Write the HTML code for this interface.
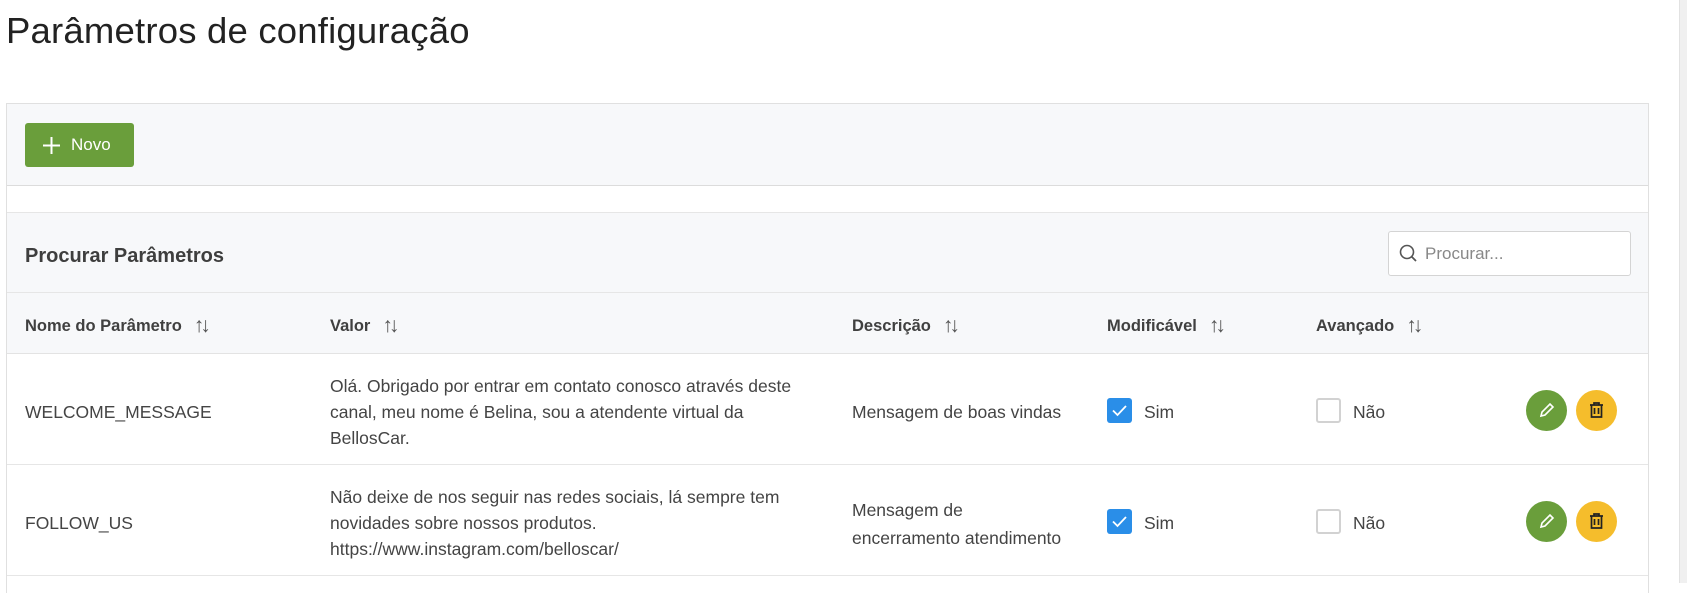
<!DOCTYPE html>
<html><head><meta charset="utf-8"><style>
*{box-sizing:border-box;margin:0;padding:0}
body{width:1687px;height:583px;background:#fff;font-family:"Liberation Sans",sans-serif;color:#333;position:relative;overflow:hidden}
.abs{position:absolute}
h1{position:absolute;left:6px;top:10px;font-size:36.5px;font-weight:normal;color:#222;letter-spacing:0.2px}
.card{position:absolute;left:6px;top:103px;width:1643px;height:490px;border:1px solid #e0e0e0;border-bottom:none}
.tb{position:absolute;left:0;top:0;width:100%;height:82px;background:#f7f8fa;border-bottom:1px solid #dcdcdc}
.btn{position:absolute;left:18px;top:19px;width:109px;height:44px;background:#6a9e3b;border-radius:3px;color:#fff;font-size:17px;line-height:44px;padding-left:46px}
.btn svg{position:absolute;left:18px;top:14px}
.sh{position:absolute;left:0;top:108px;width:100%;height:81px;background:#f7f8fa;border-top:1px solid #e6e6e6;border-bottom:1px solid #e6e6e6}
.sh .t{position:absolute;left:18px;top:32px;font-size:20px;font-weight:bold;color:#3e3e3e}
.search{position:absolute;left:1381px;top:18px;width:243px;height:45px;background:#fff;border:1px solid #d4d4d4;border-radius:3px;font-size:17px;color:#888;line-height:43px;padding-left:36px}
.search svg{position:absolute;left:10px;top:12px}
.hd{position:absolute;left:0;top:189px;width:100%;height:61px;background:#f7f8fa;border-bottom:1px solid #e3e3e3}
.hd span{position:absolute;top:20px;font-size:16.5px;font-weight:bold;color:#404040}
.hd span i{font-style:normal;font-weight:normal;color:#555;margin-left:12px;letter-spacing:-4px;font-size:21px;position:relative;top:1px}
.row{position:absolute;left:0;width:100%;height:111px;border-bottom:1px solid #e6e6e6;font-size:17.5px;color:#444;line-height:26px}
.row div{position:absolute}
.cb{width:25px;height:25px;border-radius:3px}
.on{background:#2a8ee8}
.off{border:2px solid #d2d2d2;background:#fff}
.cir{width:41px;height:41px;border-radius:50%}
</style></head><body>
<h1>Parâmetros de configuração</h1>
<div class="abs" style="left:1679px;top:0;width:8px;height:583px;background:#f0f0f0;border-left:1px solid #e2e2e2"></div>
<div class="card">
 <div class="tb"><div class="btn"><svg width="17" height="17" viewBox="0 0 17 17"><path d="M8.5 0V17M0 8.5H17" stroke="#fff" stroke-width="2"/></svg>Novo</div></div>
 <div class="sh"><div class="t">Procurar Parâmetros</div>
  <div class="search"><svg width="20" height="20" viewBox="0 0 20 20"><circle cx="8" cy="8" r="6.5" stroke="#555" stroke-width="1.6" fill="none"/><path d="M12.5 12.5L17 17" stroke="#555" stroke-width="1.8"/></svg>Procurar...</div></div>
 <div class="hd">
  <span style="left:18px">Nome do Parâmetro<i>↑↓</i></span>
  <span style="left:323px">Valor<i>↑↓</i></span>
  <span style="left:845px">Descrição<i>↑↓</i></span>
  <span style="left:1100px">Modificável<i>↑↓</i></span>
  <span style="left:1309px">Avançado<i>↑↓</i></span>
 </div>
 <div class="row" style="top:250px">
  <div style="left:18px;top:45px">WELCOME_MESSAGE</div>
  <div style="left:323px;top:19px;width:560px">Olá. Obrigado por entrar em contato conosco através deste<br>canal, meu nome é Belina, sou a atendente virtual da<br>BellosCar.</div>
  <div style="left:845px;top:45px">Mensagem de boas vindas</div>
  <div class="cb on" style="left:1100px;top:44px"><svg width="25" height="25"><path d="M6 12.5L10.5 17L19 8" stroke="#fff" stroke-width="1.8" fill="none"/></svg></div>
  <div style="left:1137px;top:45px">Sim</div>
  <div class="cb off" style="left:1309px;top:44px"></div>
  <div style="left:1346px;top:45px">Não</div>
  <div class="cir" style="left:1519px;top:36px;background:#6a9e3b"><svg width="41" height="41"><path d="M15 26L16 22L24 14L27 17L19 25Z" stroke="#fff" stroke-width="1.6" fill="none"/></svg></div>
  <div class="cir" style="left:1569px;top:36px;background:#f5bd2c"><svg width="41" height="41"><path d="M14 15H27M18 15V13H23V15M15.5 15V27H25.5V15M18.5 18V24M22.5 18V24" stroke="#222" stroke-width="1.7" fill="none"/></svg></div>
 </div>
 <div class="row" style="top:361px">
  <div style="left:18px;top:45px">FOLLOW_US</div>
  <div style="left:323px;top:19px;width:560px">Não deixe de nos seguir nas redes sociais, lá sempre tem<br>novidades sobre nossos produtos.<br>https://www.instagram.com/belloscar/</div>
  <div style="left:845px;top:31px;line-height:28px">Mensagem de<br>encerramento atendimento</div>
  <div class="cb on" style="left:1100px;top:44px"><svg width="25" height="25"><path d="M6 12.5L10.5 17L19 8" stroke="#fff" stroke-width="1.8" fill="none"/></svg></div>
  <div style="left:1137px;top:45px">Sim</div>
  <div class="cb off" style="left:1309px;top:44px"></div>
  <div style="left:1346px;top:45px">Não</div>
  <div class="cir" style="left:1519px;top:36px;background:#6a9e3b"><svg width="41" height="41"><path d="M15 26L16 22L24 14L27 17L19 25Z" stroke="#fff" stroke-width="1.6" fill="none"/></svg></div>
  <div class="cir" style="left:1569px;top:36px;background:#f5bd2c"><svg width="41" height="41"><path d="M14 15H27M18 15V13H23V15M15.5 15V27H25.5V15M18.5 18V24M22.5 18V24" stroke="#222" stroke-width="1.7" fill="none"/></svg></div>
 </div>
</div>
</body></html>
